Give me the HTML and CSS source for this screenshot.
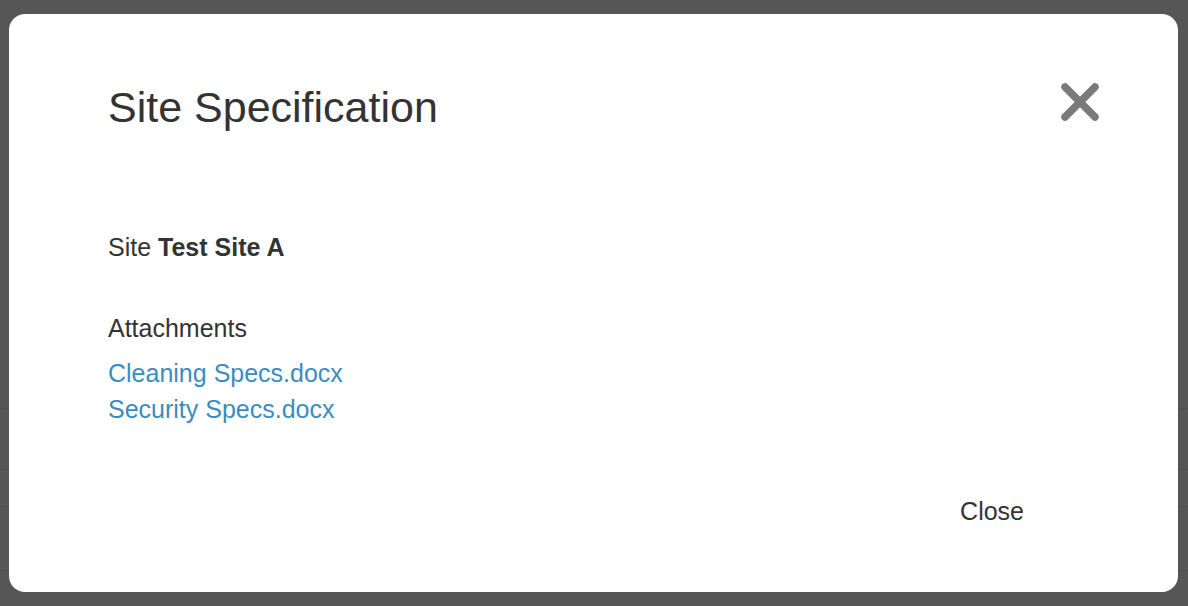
FILE: index.html
```html
<!DOCTYPE html>
<html lang="en">
<head>
<meta charset="UTF-8">
<title>Site Specification</title>
<link rel="stylesheet" href="styles.css">
</head>
<body>
<div class="backdrop">
    <div class="bg-line l1"></div>
    <div class="bg-line l2"></div>
    <div class="bg-line l3"></div>
    <div class="bg-line l4"></div>
    <div class="modal">
        <div class="modal-header">
            <h4 class="modal-title">Site Specification</h4>
            <button class="close-x" aria-label="Close">
                <svg width="40" height="40" viewBox="0 0 40 40">
                    <path d="M5 5 L35 35 M35 5 L5 35" stroke="#7a7a7a" stroke-width="7.5" stroke-linecap="round"/>
                </svg>
            </button>
        </div>
        <div class="modal-body">
            <p class="site">Site <b>Test Site A</b></p>
            <p class="label">Attachments</p>
            <a href="#">Cleaning Specs.docx</a>
            <a href="#">Security Specs.docx</a>
        </div>
        <div class="modal-footer">
            <button class="btn-close">Close</button>
        </div>
    </div>
</div>
</body>
</html>
```
FILE: styles.css
```css
body {
    font-family: 'Liberation Sans', Arial, sans-serif;
    background-color: #565656;
    margin: 0;
    color: #333;
}
.backdrop {
    position: relative;
    height: 606px;
    padding: 14px 10px 0 9px;
    box-sizing: border-box;
}
.bg-line {
    position: absolute;
    left: 0;
    right: 0;
    height: 1px;
    background-color: #4e4e4e;
}
.l1 { top: 408px; }
.l2 { top: 469px; }
.l3 { top: 506px; }
.l4 { top: 570px; }
.modal {
    position: relative;
    background-color: #ffffff;
    border-radius: 16px;
    height: 578px;
    padding: 0 78px 0 99px;
    box-sizing: border-box;
}
.modal-header {
    display: flex;
    justify-content: space-between;
    align-items: flex-start;
    height: 48px;
    padding-top: 69px;
}
.modal-title {
    margin: 0;
    font-size: 43px;
    font-weight: normal;
    line-height: 48px;
}
.close-x {
    background: none;
    border: none;
    padding: 0;
    margin-top: -1px;
    width: 40px;
    height: 40px;
    cursor: pointer;
}
.modal-body {
    font-size: 25px;
    line-height: 36px;
    padding-top: 98px;
}
.modal-body p {
    margin: 0;
}
.site {
    margin-bottom: 45px !important;
}
.label {
    margin-bottom: 9px !important;
}
.modal-body a {
    display: block;
    color: #3b8cc2;
    text-decoration: none;
}
.modal-footer {
    display: flex;
    justify-content: flex-end;
    padding-top: 66px;
    padding-right: 76px;
}
.btn-close {
    background: none;
    border: none;
    padding: 0;
    font-family: inherit;
    font-size: 25px;
    line-height: 36px;
    color: #333;
    cursor: pointer;
}
```
